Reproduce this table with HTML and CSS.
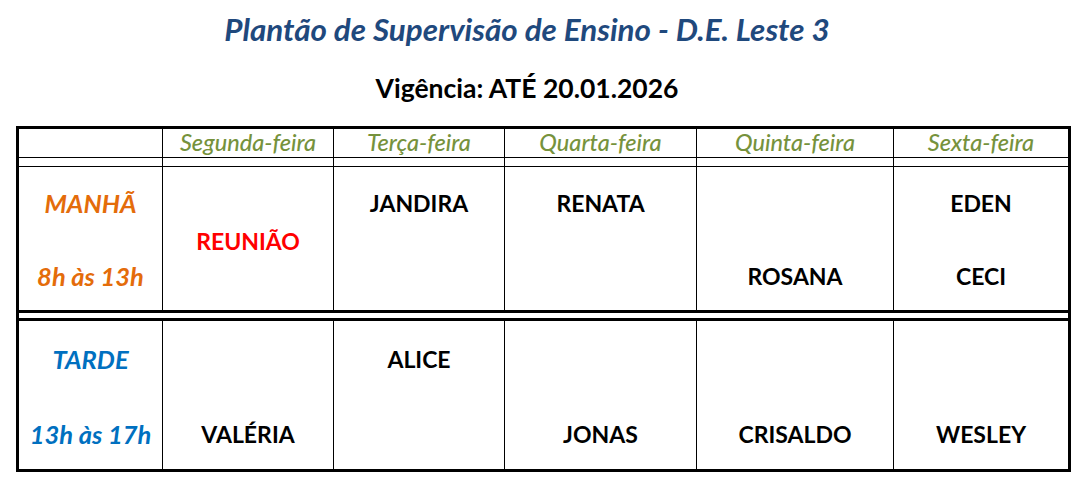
FILE: index.html
```html
<!DOCTYPE html>
<html lang="pt-BR">
<head>
<meta charset="utf-8">
<title>Plantão de Supervisão de Ensino</title>
<link rel="stylesheet" href="styles.css">
</head>
<body>
<header class="heading">
  <h1 class="title">Plantão de Supervisão de Ensino - D.E. Leste 3</h1>
  <h2 class="subtitle">Vigência: ATÉ 20.01.2026</h2>
</header>
<div class="schedule">
  <div class="row row-head">
    <div class="cell"></div>
    <div class="cell day">Segunda-feira</div>
    <div class="cell day">Terça-feira</div>
    <div class="cell day">Quarta-feira</div>
    <div class="cell day">Quinta-feira</div>
    <div class="cell day">Sexta-feira</div>
  </div>
  <div class="row row-spacer">
    <div class="cell"></div><div class="cell"></div><div class="cell"></div>
    <div class="cell"></div><div class="cell"></div><div class="cell"></div>
  </div>
  <div class="row row-morning">
    <div class="cell shift morning">
      <div class="slot top">MANHÃ</div>
      <div class="slot bottom">8h às 13h</div>
    </div>
    <div class="cell">
      <div class="slot full name alert">REUNIÃO</div>
    </div>
    <div class="cell">
      <div class="slot top name">JANDIRA</div>
      <div class="slot bottom name"></div>
    </div>
    <div class="cell">
      <div class="slot top name">RENATA</div>
      <div class="slot bottom name"></div>
    </div>
    <div class="cell">
      <div class="slot top name"></div>
      <div class="slot bottom name">ROSANA</div>
    </div>
    <div class="cell">
      <div class="slot top name">EDEN</div>
      <div class="slot bottom name">CECI</div>
    </div>
  </div>
  <div class="divider"></div>
  <div class="row row-afternoon">
    <div class="cell shift afternoon">
      <div class="slot top">TARDE</div>
      <div class="slot bottom">13h às 17h</div>
    </div>
    <div class="cell">
      <div class="slot top name"></div>
      <div class="slot bottom name">VALÉRIA</div>
    </div>
    <div class="cell">
      <div class="slot top name">ALICE</div>
      <div class="slot bottom name"></div>
    </div>
    <div class="cell">
      <div class="slot top name"></div>
      <div class="slot bottom name">JONAS</div>
    </div>
    <div class="cell">
      <div class="slot top name"></div>
      <div class="slot bottom name">CRISALDO</div>
    </div>
    <div class="cell">
      <div class="slot top name"></div>
      <div class="slot bottom name">WESLEY</div>
    </div>
  </div>
</div>
</body>
</html>
```
FILE: styles.css
```css
* { box-sizing: border-box; }

html, body {
  margin: 0;
  padding: 0;
  background: #ffffff;
}

body {
  font-family: "Lato", "Open Sans", sans-serif;
  color: #000000;
  width: 1086px;
  height: 488px;
  overflow: hidden;
}

.heading {
  width: 1054px;
  height: 126px;
  text-align: center;
}

.title {
  margin: 0;
  padding-top: 11px;
  height: 60px;
  font-size: 31.4px;
  line-height: 36px;
  font-weight: 700;
  font-style: italic;
  color: #1f497d;
}

.subtitle {
  margin: 0;
  height: 66px;
  padding-top: 13px;
  font-size: 26.5px;
  line-height: 30px;
  font-weight: 700;
}

.schedule {
  margin-left: 16px;
  width: 1055px;
  height: 346px;
  border: 3px solid #000;
  display: flex;
  flex-direction: column;
}

.row {
  display: grid;
  grid-template-columns: 143px 171px 171px 192px 197px 175px;
}

.cell + .cell {
  border-left: 1px solid #000;
}

.row-head {
  height: 29px;
  border-bottom: 1px solid #000;
}

.day {
  text-align: center;
  font-size: 23.5px;
  line-height: 26px;
  font-style: italic;
  font-weight: 500;
  color: #76923c;
  white-space: nowrap;
}

.row-spacer {
  height: 9px;
  border-bottom: 1px solid #000;
}

.row-morning { height: 143px; }
.row-afternoon { height: 148px; }

.divider {
  height: 11px;
  border-top: 3px solid #000;
  border-bottom: 3px solid #000;
}

.row-morning .cell,
.row-afternoon .cell {
  display: grid;
  grid-template-rows: 1fr 1fr;
}

.slot {
  display: flex;
  align-items: center;
  justify-content: center;
  white-space: nowrap;
}

.slot.top { padding-top: 1px; }
.slot.bottom { padding-top: 4px; }

.slot.full { grid-row: 1 / 3; padding-top: 4px; }

.name {
  font-size: 23px;
  font-weight: 700;
}

.alert { color: #ff0000; }

.shift {
  font-size: 25.5px;
  font-style: italic;
  font-weight: 700;
}

.morning { color: #e46c0a; }
.afternoon { color: #0070c0; }
```
